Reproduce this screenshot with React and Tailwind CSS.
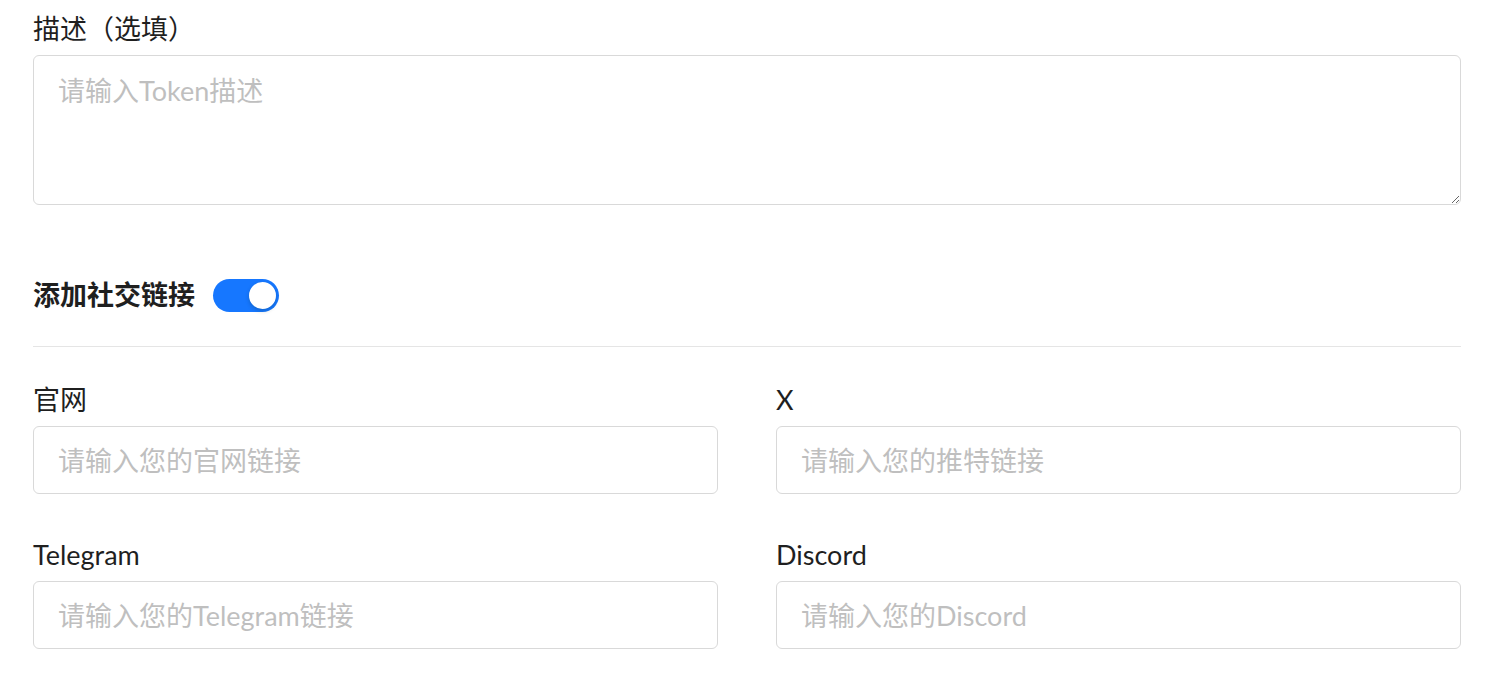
import React, { useState } from "react";

const font = { fontFamily: 'Lato, "Noto Sans CJK SC", sans-serif' };

function Field({ label, placeholder }) {
  return (
    <div className="flex flex-col">
      <label className="text-[27px] leading-[40px] text-[#1f1f1f] mb-[6px]">{label}</label>
      <input
        placeholder={placeholder}
        className="h-[68px] w-full rounded-[6px] border border-[#d9d9d9] bg-white px-[24px] text-[27px] text-[#1f1f1f] placeholder:text-[#bfbfbf] outline-none"
      />
    </div>
  );
}

export default function App() {
  const [social, setSocial] = useState(true);

  return (
    <div className="min-h-screen bg-white px-[33px] pt-[9px] pr-[50px]" style={font}>
      <label className="block text-[27px] leading-[40px] text-[#1f1f1f] mb-[6px]">描述（选填）</label>
      <textarea
        placeholder="请输入Token描述"
        className="block h-[150px] w-full resize-y rounded-[6px] border border-[#d9d9d9] bg-white px-[24px] pt-[15px] text-[27px] leading-[40px] placeholder:text-[#bfbfbf] outline-none"
      />

      {/* social links toggle */}
      <div className="mt-[70px] flex h-[40px] items-center gap-[18px]">
        <span className="text-[27px] font-bold text-[#1f1f1f]">添加社交链接</span>
        <button
          onClick={() => setSocial(!social)}
          className={`relative h-[33px] w-[66px] rounded-full ${social ? "bg-[#1677ff]" : "bg-[#bfbfbf]"}`}
        >
          <span
            className={`absolute top-[3px] h-[27px] w-[27px] rounded-full bg-white shadow-[0_2px_4px_rgba(0,35,11,0.2)] ${social ? "right-[3px]" : "left-[3px]"}`}
          />
        </button>
      </div>
      <div className="mt-[31px] h-px bg-[#e5e5e5]" />

      {social && (
        <div className="mt-[33px] grid grid-cols-2 gap-x-[58px] gap-y-[41px]">
          <Field label="官网" placeholder="请输入您的官网链接" />
          <Field label="X" placeholder="请输入您的推特链接" />
          <Field label="Telegram" placeholder="请输入您的Telegram链接" />
          <Field label="Discord" placeholder="请输入您的Discord" />
        </div>
      )}
    </div>
  );
}
